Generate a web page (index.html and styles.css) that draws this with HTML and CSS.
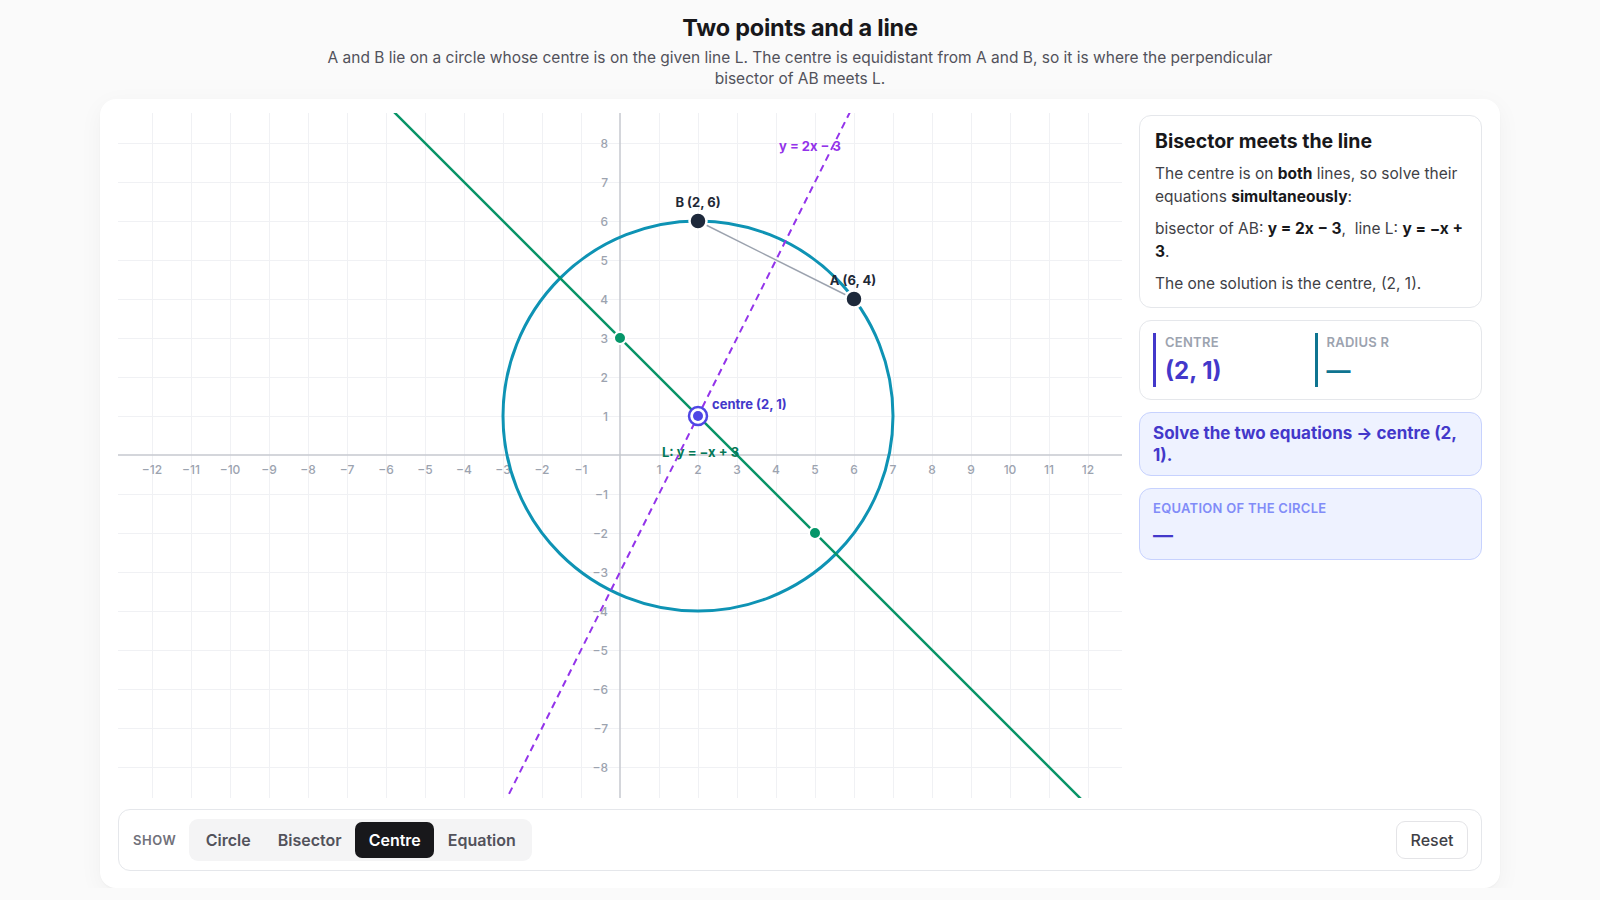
FILE: index.html
```html
<!DOCTYPE html>
<html lang="en">
<head>
<meta charset="utf-8">
<title>Two points and a line</title>
<link rel="stylesheet" href="styles.css">
</head>
<body>
<header class="head">
  <h1 class="title">Two points and a line</h1>
  <p class="subtitle">A and B lie on a circle whose centre is on the given line L. The centre is equidistant from A and B, so it is where the perpendicular bisector of AB meets L.</p>
</header>
<main class="card">
  <div class="body">
    <div class="graph">
      <svg class="plot" width="1004" height="685" viewBox="0 0 1004 685">
        <path class="grid" d="M34.5 0V685M73.5 0V685M112.5 0V685M151.5 0V685M190.5 0V685M229.5 0V685M268.5 0V685M307.5 0V685M346.5 0V685M385.5 0V685M424.5 0V685M463.5 0V685M541.5 0V685M580.5 0V685M619.5 0V685M658.5 0V685M697.5 0V685M736.5 0V685M775.5 0V685M814.5 0V685M853.5 0V685M892.5 0V685M931.5 0V685M970.5 0V685M0 30.5H1004M0 69.5H1004M0 108.5H1004M0 147.5H1004M0 186.5H1004M0 225.5H1004M0 264.5H1004M0 303.5H1004M0 381.5H1004M0 420.5H1004M0 459.5H1004M0 498.5H1004M0 537.5H1004M0 576.5H1004M0 615.5H1004M0 654.5H1004"/>
        <path class="axis" d="M0 342H1004M502 0V685"/>
        <g class="ticks-x">
          <text x="34" y="356">−12</text><text x="73" y="356">−11</text><text x="112" y="356">−10</text><text x="151" y="356">−9</text><text x="190" y="356">−8</text><text x="229" y="356">−7</text><text x="268" y="356">−6</text><text x="307" y="356">−5</text><text x="346" y="356">−4</text><text x="385" y="356">−3</text><text x="424" y="356">−2</text><text x="463" y="356">−1</text>
          <text x="541" y="356">1</text><text x="580" y="356">2</text><text x="619" y="356">3</text><text x="658" y="356">4</text><text x="697" y="356">5</text><text x="736" y="356">6</text><text x="775" y="356">7</text><text x="814" y="356">8</text><text x="853" y="356">9</text><text x="892" y="356">10</text><text x="931" y="356">11</text><text x="970" y="356">12</text>
        </g>
        <g class="ticks-y">
          <text x="490" y="30">8</text><text x="490" y="69">7</text><text x="490" y="108">6</text><text x="490" y="147">5</text><text x="490" y="186">4</text><text x="490" y="225">3</text><text x="490" y="264">2</text><text x="490" y="303">1</text>
          <text x="490" y="381">−1</text><text x="490" y="420">−2</text><text x="490" y="459">−3</text><text x="490" y="498">−4</text><text x="490" y="537">−5</text><text x="490" y="576">−6</text><text x="490" y="615">−7</text><text x="490" y="654">−8</text>
        </g>
        <circle class="circ" cx="580" cy="303" r="195"/>
        <line class="line-l" x1="-278" y1="-555" x2="1282" y2="1005"/>
        <line class="bisector" x1="112" y1="1239" x2="892" y2="-321"/>
        <line class="chord" x1="580" y1="108" x2="736" y2="186"/>
        <circle class="pt-green" cx="502" cy="225" r="6"/>
        <circle class="pt-green" cx="697" cy="420" r="6"/>
        <circle class="pt-dark" cx="580" cy="108" r="8.5"/>
        <circle class="pt-dark" cx="736" cy="186" r="8.5"/>
        <circle class="centre-ring" cx="580" cy="303" r="9"/>
        <circle class="centre-dot" cx="580" cy="303" r="5"/>
        <text class="lbl lbl-pt" x="580" y="89" text-anchor="middle">B (2, 6)</text>
        <text class="lbl lbl-pt" x="735" y="167" text-anchor="middle">A (6, 4)</text>
        <text class="lbl lbl-centre" x="594" y="291">centre (2, 1)</text>
        <text class="lbl lbl-bis" x="661" y="33">y = 2x − 3</text>
        <text class="lbl lbl-l" x="544" y="339">L: y = −x + 3</text>
      </svg>
    </div>
    <aside class="panel">
      <section class="box explain">
        <h2 class="explain-title">Bisector meets the line</h2>
        <p>The centre is on <b>both</b> lines, so solve their equations <b>simultaneously</b>:</p>
        <p>bisector of AB: <b>y = 2x − 3</b>,&nbsp; line L: <b>y = −x + 3</b>.</p>
        <p>The one solution is the centre, (2, 1).</p>
      </section>
      <section class="box stats">
        <div class="stat stat-centre">
          <div class="stat-label">Centre</div>
          <div class="stat-value">(2, 1)</div>
        </div>
        <div class="stat stat-radius">
          <div class="stat-label">Radius r</div>
          <div class="stat-value">—</div>
        </div>
      </section>
      <section class="note">Solve the two equations → centre (2, 1).</section>
      <section class="eq">
        <div class="eq-label">Equation of the circle</div>
        <div class="eq-value">—</div>
      </section>
    </aside>
  </div>
  <div class="controls">
    <div class="show">
      <span class="show-label">Show</span>
      <div class="seg">
        <button class="seg-btn">Circle</button>
        <button class="seg-btn">Bisector</button>
        <button class="seg-btn active">Centre</button>
        <button class="seg-btn">Equation</button>
      </div>
    </div>
    <button class="reset">Reset</button>
  </div>
</main>
</body>
</html>
```

FILE: styles.css
```css
* { box-sizing: border-box; }

body {
  margin: 0;
  background: #fafafa;
  font-family: Inter, "Noto Sans", sans-serif;
  color: #18181b;
}

.head {
  text-align: center;
  padding-top: 14px;
}

.title {
  margin: 0;
  font-size: 23.5px;
  line-height: 28px;
  font-weight: 700;
  letter-spacing: -0.01em;
  color: #18181b;
}

.subtitle {
  margin: 5px auto 0;
  max-width: 980px;
  font-size: 15.5px;
  line-height: 21px;
  color: #52525b;
}

.card {
  width: 1400px;
  margin: 10px auto 0;
  background: #fff;
  border-radius: 16px;
  padding: 14px 18px 17px;
  box-shadow: 0 1px 2px rgba(0, 0, 0, 0.03), 0 6px 24px rgba(0, 0, 0, 0.045);
}

.body {
  display: grid;
  grid-template-columns: 1004px 1fr;
  column-gap: 17px;
  align-items: start;
}

.graph {
  height: 685px;
  border-radius: 12px;
  overflow: hidden;
}

.plot {
  display: block;
  font-family: Inter, "Noto Sans", sans-serif;
}

.grid { stroke: #f0f1f4; stroke-width: 1; fill: none; }
.axis { stroke: #c6c9cf; stroke-width: 1.5; fill: none; }

.ticks-x text, .ticks-y text {
  font-size: 12px;
  font-weight: 500;
  fill: #9ca3af;
  dominant-baseline: central;
}
.ticks-x text { text-anchor: middle; }
.ticks-y text { text-anchor: end; }

.circ { fill: none; stroke: #0e93b4; stroke-width: 3; }
.line-l { stroke: #089467; stroke-width: 2.5; }
.bisector { stroke: #9333ea; stroke-width: 2; stroke-dasharray: 7 5; }
.chord { stroke: #9ca3af; stroke-width: 1.5; }

.pt-green { fill: #059669; stroke: #fff; stroke-width: 2; }
.pt-dark { fill: #1e293b; stroke: #fff; stroke-width: 2.5; }
.centre-ring { fill: #fff; stroke: #4f46e5; stroke-width: 2.5; }
.centre-dot { fill: #4f46e5; }

.lbl {
  font-size: 13px;
  font-weight: 700;
  dominant-baseline: central;
}
.lbl-pt { fill: #1f2937; }
.lbl-centre { fill: #4338ca; }
.lbl-bis { fill: #9333ea; }
.lbl-l { fill: #047857; }

.panel {
  display: flex;
  flex-direction: column;
  gap: 12px;
  margin-top: 2px;
}

.box {
  border: 1px solid #e5e7eb;
  border-radius: 12px;
  background: #fff;
}

.explain {
  padding: 12px 15px 12px;
}

.explain-title {
  margin: 0 0 8px;
  font-size: 19.5px;
  line-height: 26px;
  font-weight: 700;
  color: #18181b;
}

.explain p {
  margin: 0 0 8px;
  font-size: 15.5px;
  line-height: 23.4px;
  color: #3f3f46;
}
.explain p:last-child { margin-bottom: 0; }
.explain b { color: #18181b; font-weight: 700; }

.stats {
  padding: 12px 13px;
  display: grid;
  grid-template-columns: 1fr 1fr;
  column-gap: 8px;
}

.stat {
  padding-left: 9px;
  border-left: 3px solid #4338ca;
}
.stat-radius { border-left-color: #0e7490; }

.stat-label {
  font-size: 13px;
  line-height: 18px;
  font-weight: 600;
  text-transform: uppercase;
  letter-spacing: 0.02em;
  color: #9ca3af;
}

.stat-value {
  margin-top: 4px;
  font-size: 24px;
  line-height: 32px;
  font-weight: 700;
  color: #4338ca;
}
.stat-radius .stat-value { color: #0e7490; }

.note {
  padding: 9px 13px 8px;
  border: 1px solid #c7d2fe;
  border-radius: 12px;
  background: #eef2ff;
  font-size: 17px;
  line-height: 22.3px;
  font-weight: 700;
  color: #4338ca;
}

.eq {
  padding: 10px 13px 10px;
  border: 1px solid #c7d2fe;
  border-radius: 12px;
  background: #eef2ff;
}

.eq-label {
  font-size: 13px;
  line-height: 18px;
  font-weight: 600;
  text-transform: uppercase;
  letter-spacing: 0.02em;
  color: #818cf8;
}

.eq-value {
  margin-top: 4px;
  font-size: 20px;
  line-height: 28px;
  font-weight: 700;
  color: #4338ca;
}

.controls {
  margin-top: 11px;
  height: 62px;
  border: 1px solid #e5e7eb;
  border-radius: 12px;
  padding: 0 13px 0 14px;
  display: flex;
  align-items: center;
  justify-content: space-between;
}

.show {
  display: flex;
  align-items: center;
  gap: 13px;
}

.show-label {
  font-size: 13px;
  font-weight: 600;
  letter-spacing: 0.04em;
  text-transform: uppercase;
  color: #71717a;
}

.seg {
  display: flex;
  padding: 3px;
  background: #f4f4f5;
  border-radius: 9px;
}

.seg-btn {
  height: 36px;
  padding: 0 13.5px;
  border: 0;
  border-radius: 7px;
  background: transparent;
  font-family: inherit;
  font-size: 16px;
  font-weight: 600;
  color: #52525b;
}

.seg-btn.active {
  background: #18181b;
  color: #fff;
}

.reset {
  height: 38px;
  width: 72px;
  border: 1px solid #e4e4e7;
  border-radius: 9px;
  background: #fff;
  font-family: inherit;
  font-size: 16px;
  font-weight: 500;
  color: #3f3f46;
}
```
